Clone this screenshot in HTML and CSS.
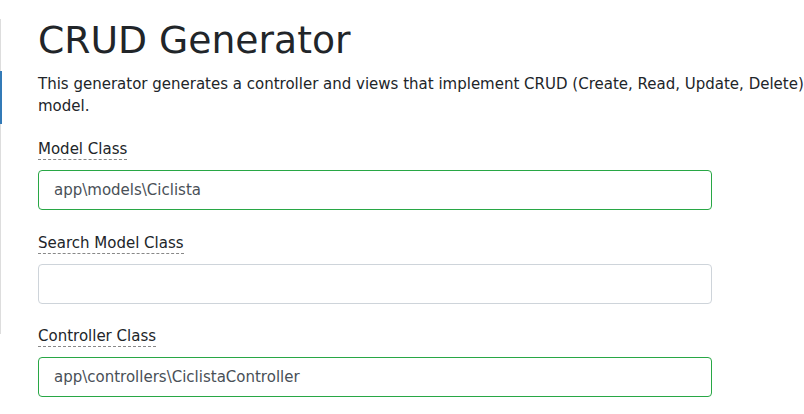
FILE: index.html
```html
<!DOCTYPE html>
<html lang="en">
<head>
<meta charset="utf-8">
<title>CRUD Generator</title>
<link rel="stylesheet" href="styles.css">
</head>
<body>
<div class="layout">
  <nav class="sidebar">
    <a class="side-item"></a>
    <a class="side-item active"></a>
    <a class="side-item"></a>
    <a class="side-item"></a>
    <a class="side-item"></a>
    <a class="side-item last"></a>
  </nav>
  <main class="main">
    <h1 class="title">CRUD Generator</h1>
    <p class="desc">This generator generates a controller and views that implement CRUD (Create, Read, Update, Delete) operations for the specified data model.</p>
    <form class="form">
      <div class="field">
        <label class="label"><span class="hint">Model Class</span></label>
        <div class="col"><input class="input valid" type="text" value="app\models\Ciclista"></div>
      </div>
      <div class="field">
        <label class="label"><span class="hint">Search Model Class</span></label>
        <div class="col"><input class="input" type="text" value=""></div>
      </div>
      <div class="field">
        <label class="label"><span class="hint">Controller Class</span></label>
        <div class="col"><input class="input valid" type="text" value="app\controllers\CiclistaController"></div>
      </div>
    </form>
  </main>
</div>
</body>
</html>
```
FILE: styles.css
```css
html, body {
  margin: 0;
  padding: 0;
  background: #fff;
  overflow: hidden;
}
body {
  font-family: "DejaVu Sans", Verdana, sans-serif;
  font-size: 15px;
  color: #212529;
}
.layout {
  display: flex;
  align-items: flex-start;
}
.sidebar {
  flex: 0 0 2px;
  display: flex;
  flex-direction: column;
  margin-top: 19px;
}
.side-item {
  display: block;
  height: 52px;
  border-left: 1px solid #dddddd;
}
.side-item.active {
  border-left: 2px solid #337ab7;
  height: 53px;
}
.side-item.last {
  height: 54px;
}
.main {
  flex: 0 0 1026px;
  margin-left: 36px;
}
.title {
  font-size: 37.7px;
  font-weight: 400;
  line-height: 1.2;
  margin: 18px 0 0;
}
.desc {
  margin: 10px 0 0;
  line-height: 22px;
}
.form {
  margin-top: 21px;
}
.field {
  margin-bottom: 21.5px;
}
.label {
  display: inline-block;
  margin-bottom: 10px;
  line-height: 22px;
}
.hint {
  border-bottom: 1px dashed #888;
  padding-bottom: 1px;
}
.col {
  width: 674px;
}
.input {
  display: block;
  box-sizing: border-box;
  width: 100%;
  height: 40px;
  padding: 0 15px;
  font-family: "DejaVu Sans", Verdana, sans-serif;
  font-size: 15px;
  color: #495057;
  background: #fff;
  border: 1px solid #ced4da;
  border-radius: 4px;
  outline: none;
}
.input.valid {
  border-color: #28a745;
}
```
